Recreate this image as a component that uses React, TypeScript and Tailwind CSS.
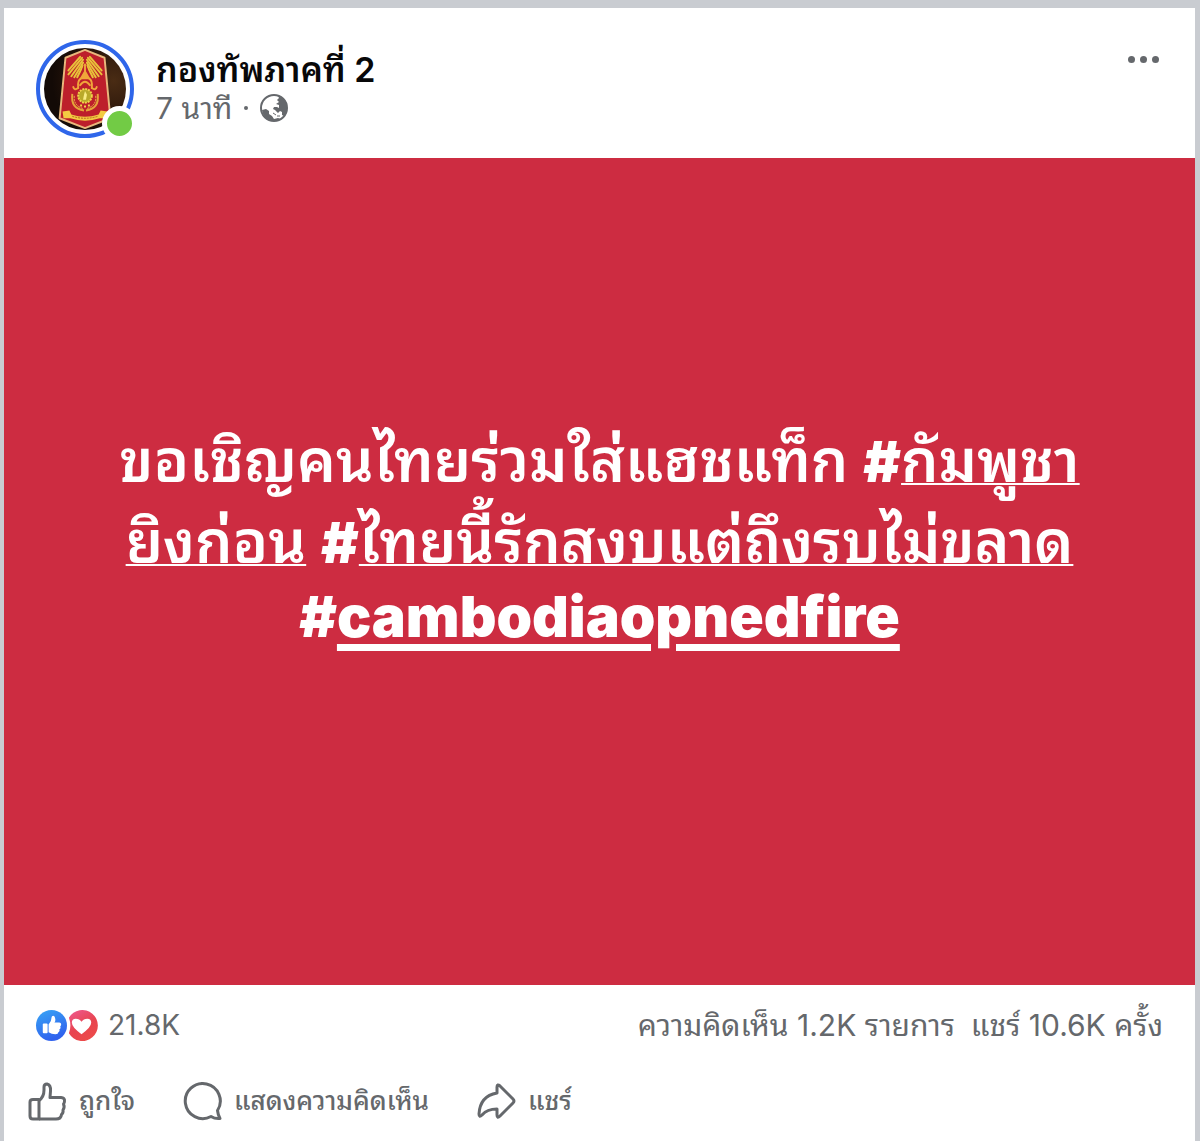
import type { ReactNode } from "react"

type Action = {
  label: string
  icon: ReactNode
}

// Plumas del ala izquierda (x1, y1, x2, y2), la derecha es el reflejo
const feathers = [
  [37, 9, 25, 23],
  [39, 10, 25, 27],
  [40, 12, 28, 29],
  [40, 15, 31, 30],
  [40, 18, 34, 30],
]

function Emblem() {
  return (
    <svg viewBox="0 0 84 84" className="size-full rounded-full" role="img" aria-label="กองทัพภาคที่ 2">
      <defs>
        <radialGradient id="backdrop" cx="85%" cy="40%" r="75%">
          <stop offset="0" stopColor="#4a2c14" />
          <stop offset="0.6" stopColor="#2a160b" />
          <stop offset="1" stopColor="#130a06" />
        </radialGradient>
      </defs>
      <rect width="84" height="84" fill="url(#backdrop)" />
      {/* Escudo */}
      <path d="M22 10 L42 2 L62 10 L68 72 L42 82 L16 72 Z" fill="#bd1f2b" stroke="#e9b77c" strokeWidth="2" strokeLinejoin="round" />
      {/* Alas */}
      <g stroke="#e8c23a" strokeWidth="2" strokeLinecap="round">
        {feathers.map(([x1, y1, x2, y2], i) => (
          <g key={i}>
            <line x1={x1} y1={y1} x2={x2} y2={y2} />
            <line x1={84 - x1} y1={y1} x2={84 - x2} y2={y2} />
          </g>
        ))}
      </g>
      {/* Corona */}
      <path d="M42 13 L48 32 H36 Z" fill="#bd1f2b" />
      <g fill="none" stroke="#f0a63a" strokeLinecap="round" strokeWidth="2">
        <path d="M42 17 V25" />
        <path d="M42 24 L38 31 H46 Z" fill="#f0a63a" />
        <path d="M37 38 Q42 31 47 38 M35 41 Q34 33 38 31 M49 41 Q50 33 46 31" />
        <path d="M35 41 Q31 44 30 40 M49 41 Q53 44 54 40" />
      </g>
      {/* Medalla y laureles */}
      <circle cx="42" cy="49" r="7" fill="#b9aa2a" stroke="#f1d24b" strokeWidth="2" strokeDasharray="2 1" />
      <path d="M42 44 L44 48 L43 53 H40 L41 48 Z" fill="#f8ec83" />
      <path d="M29 47 Q27 62 41 64 M55 47 Q57 62 43 64" fill="none" stroke="#e4a43a" strokeWidth="2" />
      <path d="M31 49 Q30 59 40 62 M53 49 Q54 59 44 62" fill="none" stroke="#f1c24b" strokeWidth="1" strokeDasharray="2 1" />
      <path d="M37 59 h2 M41 60 h2 M45 59 h2" stroke="#f1d24b" strokeWidth="2" />
      {/* Cinta */}
      <path d="M19 65 L26 64 L28 68 Q42 73 56 68 L58 64 L65 65 L63 72 L57 72 Q42 77 27 72 L20 72 Z" fill="#f3cb42" />
      <path d="M29 70 Q42 74 55 70" fill="none" stroke="#b5651d" strokeWidth="1" strokeDasharray="2 1" />
    </svg>
  )
}

function GlobeIcon() {
  return (
    <svg viewBox="0 0 28 28" className="size-7" role="img" aria-label="สาธารณะ">
      <circle cx="14" cy="14" r="13" fill="#fff" stroke="#65686c" strokeWidth="2" />
      <path
        d="M18 2 Q27 5 27 14 Q27 20 24 22 L22 21 L22 18 L20 17 L18 19 L15 16 L13 15 L14 13 L17 13 L19 14 L19 11 L16 10 L19 8 L17 6 L19 4 Z"
        fill="#65686c"
      />
      <path d="M2 16 L6 15 L9 17 L9 20 L12 22 L14 25 L18 24 L21 25 Q14 29 7 25 Q3 22 2 16 Z" fill="#65686c" />
      <path d="M13 19 L16 21 M17 22 h3" stroke="#65686c" strokeWidth="1" />
    </svg>
  )
}

function LikeBadge() {
  return (
    <svg viewBox="0 0 32 32" className="size-[31px]" aria-hidden="true">
      <defs>
        <linearGradient id="like" x1="0" y1="0" x2="0.4" y2="1">
          <stop offset="0" stopColor="#38a5f5" />
          <stop offset="1" stopColor="#2f62ee" />
        </linearGradient>
      </defs>
      <circle cx="16" cy="16" r="16" fill="url(#like)" />
      <rect x="7" y="14" width="5" height="10" rx="1" fill="#fff" />
      <path
        d="M13 15 Q16 12 16 8 Q16 6 18 6 Q20 7 20 10 Q20 12 19 13 H24 Q26 13 26 15 Q26 16 25 17 Q26 19 24 20 Q25 22 23 23 Q23 25 20 25 Q16 25 13 23 Z"
        fill="#fff"
      />
    </svg>
  )
}

function LoveBadge() {
  return (
    <svg viewBox="0 0 32 32" className="size-[31px]" aria-hidden="true">
      <defs>
        <linearGradient id="love" x1="0" y1="0" x2="0.5" y2="1">
          <stop offset="0" stopColor="#ee5a92" />
          <stop offset="0.6" stopColor="#e8444f" />
          <stop offset="1" stopColor="#ec4a4a" />
        </linearGradient>
      </defs>
      <path d="M2 8 A16 16 0 1 1 2 24 Q5 16 2 8 Z" fill="url(#love)" />
      <path d="M15 25 Q5 18 5 13 Q5 9 9 9 Q13 9 15 12 Q17 9 21 9 Q25 9 25 13 Q25 18 15 25 Z" fill="#fff" />
    </svg>
  )
}

const actions: Action[] = [
  {
    label: "ถูกใจ",
    icon: (
      <>
        <path d="M11 17.5 H5 Q2 17.5 2 20 V34 Q2 37 5 37 H11 Z" />
        <path d="M11 18.5 Q16 15 16 8 V5 Q16 2 19 2 Q23 3 22.5 9 L22 15.5 H33 Q37 16 36.5 19 Q36.5 21 35.5 22 Q37 25 35 28 Q35.5 31 33.5 32.5 Q33 37 28 37 H11" />
      </>
    ),
  },
  {
    label: "แสดงความคิดเห็น",
    icon: <path d="M34.5 28.5 A17.5 17.5 0 1 0 28 34.5 Q32 37 37 36.5 Q35 33 34.5 28.5 Z" />,
  },
  {
    label: "แชร์",
    icon: (
      <path d="M20 11 V5 Q20 1.5 23 4 L36 17 Q38 19 36 21 L23 34 Q20 37 20 33 V27 Q10 27 5 33 Q2 36 2 32 Q3 14 20 11 Z" />
    ),
  },
]

export default function App() {
  return (
    <div className="bg-[#c9ccd1] pt-2 pr-[5px] pl-1 font-[Inter,'Noto_Sans_Thai_Looped',Loma,'Noto_Sans_Thai',sans-serif]">
      <article className="bg-white text-[#65686c]">
        {/* Cabecera */}
        <header className="flex items-start gap-[22px] px-8 pt-8 pb-5">
          <div className="relative size-[98px] shrink-0 rounded-full border-4 border-[#2f66ea] p-1">
            <Emblem />
            <span className="absolute -right-[7px] -bottom-[7px] size-[35px] rounded-full border-5 border-white bg-[#72cb45]" />
          </div>
          <div className="flex-1 pt-2">
            <h1 className="text-[34px] leading-[44px] font-semibold text-[#080809]">กองทัพภาคที่ 2</h1>
            <div className="flex items-center gap-3 text-[30px] leading-8">
              <span>7 นาที</span>
              <span className="size-1 rounded-full bg-[#65686c]" />
              <GlobeIcon />
            </div>
          </div>
          <button type="button" aria-label="เพิ่มเติม" className="flex gap-[5px] p-1 pt-4">
            <span className="size-[7px] rounded-full bg-[#65686c]" />
            <span className="size-[7px] rounded-full bg-[#65686c]" />
            <span className="size-[7px] rounded-full bg-[#65686c]" />
          </button>
        </header>

        {/* Mensaje */}
        <section className="flex aspect-[1191/827] items-center justify-center bg-[#cd2c41] pb-18 text-center text-white">
          <p className="text-[59px] leading-20 font-semibold">
            ขอเชิญคนไทยร่วมใส่แฮชแท็ก{" "}
            <a href="#cambodia-first">
              <span className="text-[57px] font-black">#</span>
              <span className="underline decoration-2">กัมพูชา<br />ยิงก่อน</span>
            </a>{" "}
            <a href="#thai">
              <span className="text-[57px] font-black">#</span>
              <span className="underline decoration-2">ไทยนี้รักสงบแต่ถึงรบไม่ขลาด</span>
            </a>
            <a href="#cambodiaopnedfire" className="block text-[57px] leading-[68px] font-black">
              #<span className="underline decoration-[7px] underline-offset-[7px]">cambodiaopnedfire</span>
            </a>
          </p>
        </section>

        {/* Reacciones */}
        <div className="flex items-center justify-between px-8 pt-5 text-[30px] leading-10">
          <div className="flex items-center">
            <LikeBadge />
            <LoveBadge />
            <span className="pl-[10px] text-[28px]">21.8K</span>
          </div>
          <div className="flex gap-4">
            <span>ความคิดเห็น 1.2K รายการ</span>
            <span>แชร์ 10.6K ครั้ง</span>
          </div>
        </div>

        {/* Acciones */}
        <footer className="flex gap-12 px-6 pt-9 pb-5">
          {actions.map((action) => (
            <button key={action.label} type="button" className="flex items-center gap-3 text-[26px] leading-10 font-medium">
              <svg viewBox="0 0 39 39" className="size-[39px]" fill="none" stroke="currentColor" strokeWidth="3" strokeLinejoin="round" aria-hidden="true">
                {action.icon}
              </svg>
              <span>{action.label}</span>
            </button>
          ))}
        </footer>
      </article>
    </div>
  )
}
